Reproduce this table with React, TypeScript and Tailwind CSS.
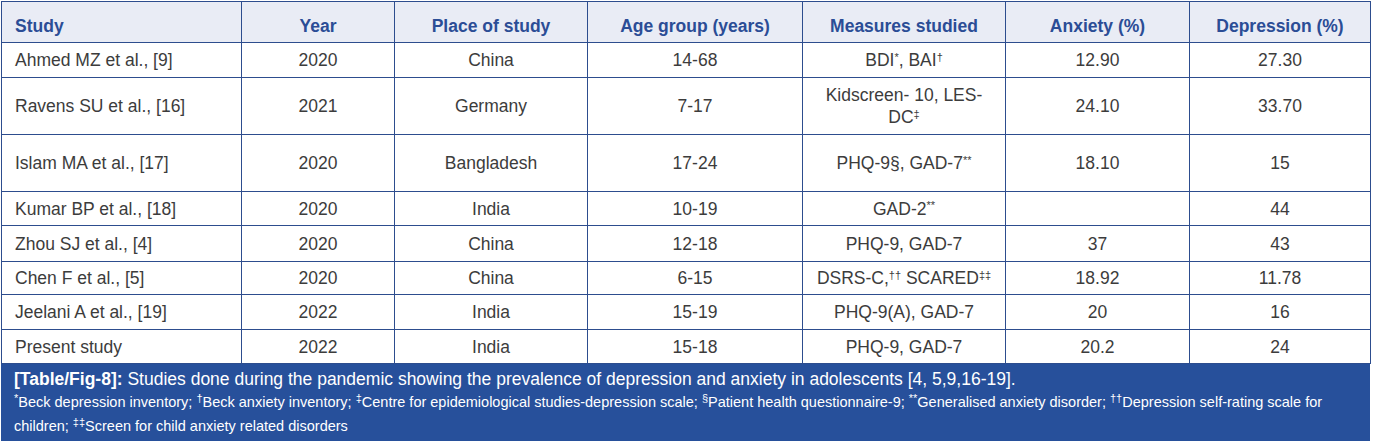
type Row = {
  study: string;
  year: string;
  place: string;
  age: string;
  measures: React.ReactNode;
  anxiety: string;
  depression: string;
  h: string;
};

const Sup = ({ children }: { children: React.ReactNode }) => <sup className="text-[11px] leading-none">{children}</sup>;

const rows: Row[] = [
  { study: "Ahmed MZ et al., [9]", year: "2020", place: "China", age: "14-68", measures: <>BDI<Sup>*</Sup>, BAI<Sup>†</Sup></>, anxiety: "12.90", depression: "27.30", h: "h-[35px]" },
  { study: "Ravens SU et al., [16]", year: "2021", place: "Germany", age: "7-17", measures: <>Kidscreen- 10, LES-<br />DC<Sup>‡</Sup></>, anxiety: "24.10", depression: "33.70", h: "h-[57px]" },
  { study: "Islam MA et al., [17]", year: "2020", place: "Bangladesh", age: "17-24", measures: <>PHQ-9§, GAD-7<Sup>**</Sup></>, anxiety: "18.10", depression: "15", h: "h-[57px]" },
  { study: "Kumar BP et al., [18]", year: "2020", place: "India", age: "10-19", measures: <>GAD-2<Sup>**</Sup></>, anxiety: "", depression: "44", h: "h-[34px]" },
  { study: "Zhou SJ et al., [4]", year: "2020", place: "China", age: "12-18", measures: "PHQ-9, GAD-7", anxiety: "37", depression: "43", h: "h-[36px]" },
  { study: "Chen F et al., [5]", year: "2020", place: "China", age: "6-15", measures: <>DSRS-C,<Sup>††</Sup> SCARED<Sup>‡‡</Sup></>, anxiety: "18.92", depression: "11.78", h: "h-[33px]" },
  { study: "Jeelani A et al., [19]", year: "2022", place: "India", age: "15-19", measures: "PHQ-9(A), GAD-7", anxiety: "20", depression: "16", h: "h-[35px]" },
  { study: "Present study", year: "2022", place: "India", age: "15-18", measures: "PHQ-9, GAD-7", anxiety: "20.2", depression: "24", h: "h-[34px]" },
];

const headers = ["Study", "Year", "Place of study", "Age group (years)", "Measures studied", "Anxiety (%)", "Depression (%)"];
const widths = ["w-[240px]", "w-[153px]", "w-[193px]", "w-[215px]", "w-[203px]", "w-[184px]", "w-[181px]"];

export default function App() {
  return (
    <div className="bg-white w-[1374px] h-[443px] pt-[1px] pl-[1px] font-['Liberation_Sans',Arial,sans-serif] text-[#3c3c3c]">
      <div className="w-[1369px] flex flex-col">
        <table className="w-full border-collapse table-fixed text-[17.5px] leading-[22px]">
          <colgroup>
            {widths.map((w, i) => (
              <col key={i} className={w} />
            ))}
          </colgroup>
          <thead>
            <tr className="h-[41px] bg-[#e9ecf5]">
              {headers.map((h, i) => (
                <th
                  key={h}
                  className={`border border-[#2d4d8e] font-bold text-[#2b4d96] pt-[8px] ${i === 0 ? "text-left pl-[13px]" : "text-center"}`}
                >
                  {h}
                </th>
              ))}
            </tr>
          </thead>
          <tbody>
            {rows.map((r) => (
              <tr key={r.study} className={r.h}>
                <td className="border border-[#2d4d8e] pl-[13px]">{r.study}</td>
                <td className="border border-[#2d4d8e] text-center">{r.year}</td>
                <td className="border border-[#2d4d8e] text-center">{r.place}</td>
                <td className="border border-[#2d4d8e] text-center">{r.age}</td>
                <td className="border border-[#2d4d8e] text-center px-[6px] whitespace-nowrap">{r.measures}</td>
                <td className="border border-[#2d4d8e] text-center">{r.anxiety}</td>
                <td className="border border-[#2d4d8e] text-center">{r.depression}</td>
              </tr>
            ))}
          </tbody>
        </table>
        <div className="bg-[#27509b] text-white h-[77px] pl-[13px] pr-[4px] pt-[4px] flex flex-col">
          <p className="text-[17.5px] leading-[22px]">
            <span className="font-bold">[Table/Fig-8]:</span> Studies done during the pandemic showing the prevalence of depression and anxiety in adolescents [4, 5,9,16-19].
          </p>
          <p className="text-[14.5px] leading-[24px]">
            <Sup>*</Sup>Beck depression inventory; <Sup>†</Sup>Beck anxiety inventory; <Sup>‡</Sup>Centre for epidemiological studies-depression scale; <Sup>§</Sup>Patient health questionnaire-9; <Sup>**</Sup>Generalised anxiety disorder; <Sup>††</Sup>Depression self-rating scale for children; <Sup>‡‡</Sup>Screen for child anxiety related disorders
          </p>
        </div>
      </div>
    </div>
  );
}
